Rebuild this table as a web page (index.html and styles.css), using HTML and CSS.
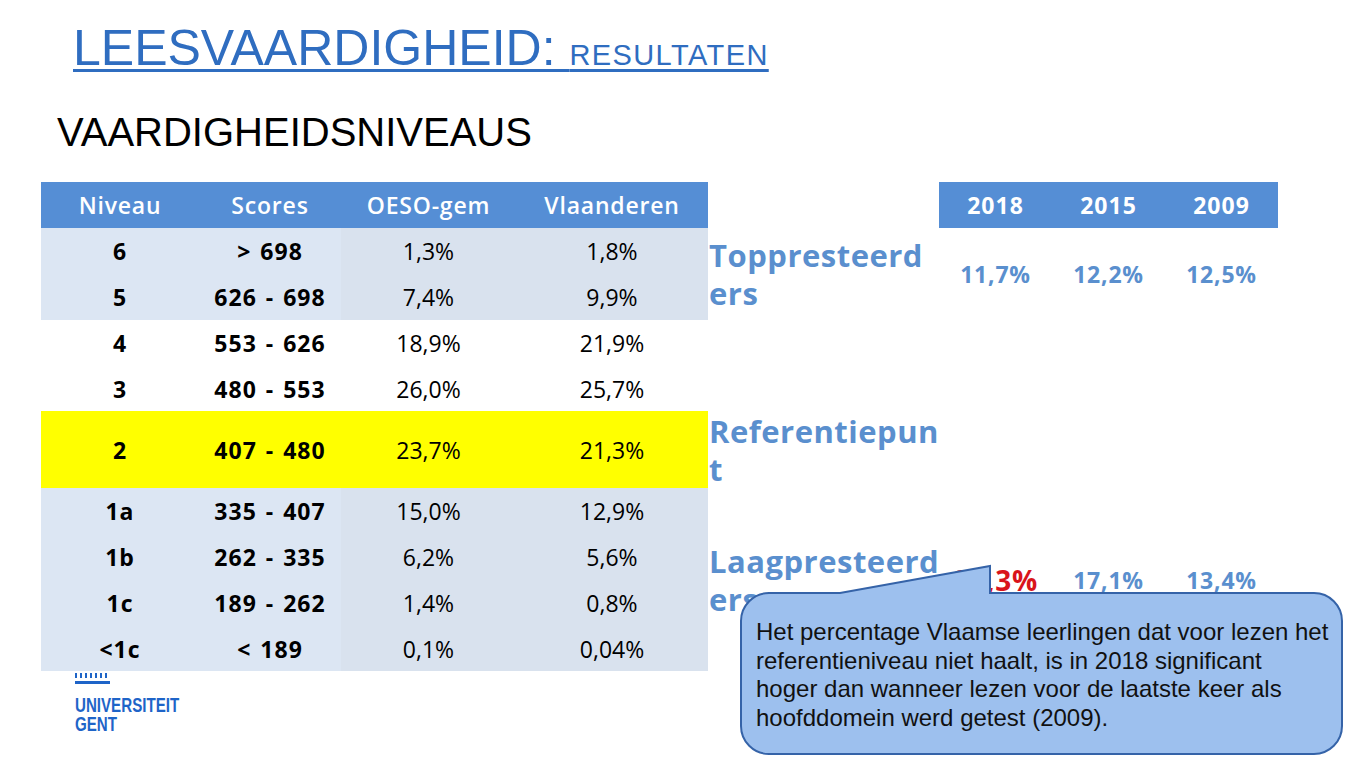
FILE: index.html
```html
<!DOCTYPE html>
<html lang="nl">
<head>
<meta charset="utf-8">
<title>Leesvaardigheid: resultaten</title>
<link rel="stylesheet" href="styles.css">
</head>
<body>
<div class="slide">
  <h1 class="title"><span class="title-main">LEESVAARDIGHEID: </span><span class="title-sub">RESULTATEN</span></h1>
  <h2 class="subtitle">VAARDIGHEIDSNIVEAUS</h2>

  <div class="content">
    <div class="left">
      <table class="levels">
        <colgroup>
          <col class="c1"><col class="c2"><col class="c3"><col class="c4">
        </colgroup>
        <thead>
          <tr class="head"><th>Niveau</th><th>Scores</th><th>OESO-gem</th><th>Vlaanderen</th></tr>
        </thead>
        <tbody>
          <tr class="band"><td class="b">6</td><td class="b">&gt; 698</td><td>1,3%</td><td>1,8%</td></tr>
          <tr class="band"><td class="b">5</td><td class="b">626 - 698</td><td>7,4%</td><td>9,9%</td></tr>
          <tr class="plain"><td class="b">4</td><td class="b">553 - 626</td><td>18,9%</td><td>21,9%</td></tr>
          <tr class="plain short"><td class="b">3</td><td class="b">480 - 553</td><td>26,0%</td><td>25,7%</td></tr>
          <tr class="ref"><td class="b">2</td><td class="b">407 - 480</td><td>23,7%</td><td>21,3%</td></tr>
          <tr class="band"><td class="b">1a</td><td class="b">335 - 407</td><td>15,0%</td><td>12,9%</td></tr>
          <tr class="band"><td class="b">1b</td><td class="b">262 - 335</td><td>6,2%</td><td>5,6%</td></tr>
          <tr class="band"><td class="b">1c</td><td class="b">189 - 262</td><td>1,4%</td><td>0,8%</td></tr>
          <tr class="band short"><td class="b">&lt;1c</td><td class="b">&lt; 189</td><td>0,1%</td><td>0,04%</td></tr>
        </tbody>
      </table>

      <div class="logo">
        <svg class="logo-mark" width="36" height="13" viewBox="0 0 36 13" aria-hidden="true">
          <g fill="#1E64C8">
            <rect x="0" y="0" width="2" height="5"/>
            <rect x="5" y="0" width="2" height="5"/>
            <rect x="10" y="0" width="2" height="5"/>
            <rect x="15" y="0" width="2" height="5"/>
            <rect x="20" y="0" width="2" height="5"/>
            <rect x="25" y="0" width="2" height="5"/>
            <rect x="30" y="0" width="2" height="5"/>
            <rect x="0" y="8" width="35" height="3"/>
          </g>
        </svg>
        <div class="logo-text">
          <div class="logo-line">UNIVERSITEIT</div>
          <div class="logo-line">GENT</div>
        </div>
      </div>
    </div>

    <div class="trend">
      <div class="t-label t-headlabel"></div>
      <div class="t-year">2018</div>
      <div class="t-year">2015</div>
      <div class="t-year">2009</div>

      <div class="t-label">Toppresteerd<br>ers</div>
      <div class="t-val">11,7%</div>
      <div class="t-val">12,2%</div>
      <div class="t-val">12,5%</div>

      <div class="t-label"></div>
      <div class="t-val"></div>
      <div class="t-val"></div>
      <div class="t-val"></div>

      <div class="t-label">Referentiepun<br>t</div>
      <div class="t-val"></div>
      <div class="t-val"></div>
      <div class="t-val"></div>

      <div class="t-label">Laagpresteerd<br>ers</div>
      <div class="t-val t-red">21,3%</div>
      <div class="t-val">17,1%</div>
      <div class="t-val">13,4%</div>
    </div>
  </div>

  <div class="callout">
    <svg class="callout-shape" width="620" height="205" viewBox="730 555 620 205" aria-hidden="true">
      <path d="M 769 593 L 840 593 L 990 566 L 990 593 L 1314 593 A 28 28 0 0 1 1342 621 L 1342 726 A 28 28 0 0 1 1314 754 L 769 754 A 28 28 0 0 1 741 726 L 741 621 A 28 28 0 0 1 769 593 Z" fill="#9DC0EE" stroke="#3563A8" stroke-width="2" stroke-linejoin="miter"/>
    </svg>
    <p class="callout-text">Het percentage Vlaamse leerlingen dat voor lezen het<br>referentieniveau niet haalt, is in 2018 significant<br>hoger dan wanneer lezen voor de laatste keer als<br>hoofddomein werd getest (2009).</p>
  </div>
</div>
</body>
</html>
```

FILE: styles.css
```css
html, body {
  margin: 0;
  padding: 0;
  background: #ffffff;
}

.slide {
  position: relative;
  width: 1365px;
  height: 768px;
  overflow: hidden;
  background: #ffffff;
  font-family: "Liberation Sans", Arial, sans-serif;
}

.title {
  margin: 0;
  padding: 20px 0 0 73px;
  font-weight: normal;
  line-height: 56px;
  color: #2F6DC0;
  white-space: nowrap;
}

.title-main {
  font-size: 50px;
  text-decoration: underline;
  text-decoration-thickness: 3px;
  text-underline-offset: 4px;
}

.title-sub {
  font-size: 29px;
  letter-spacing: 1.4px;
  text-decoration: underline;
  text-decoration-thickness: 3px;
  text-underline-offset: 4px;
}

.subtitle {
  margin: 25px 0 0 0;
  padding-left: 57px;
  font-size: 40px;
  line-height: 48px;
  font-weight: normal;
  color: #000000;
}

.content {
  display: flex;
  margin-top: 26px;
}

.left {
  margin-left: 41px;
  width: 667px;
}

.levels {
  border-collapse: collapse;
  table-layout: fixed;
  width: 667px;
  font-family: "Open Sans", "Noto Sans", sans-serif;
  font-size: 23px;
  color: #000000;
}

.c1 { width: 158px; }
.c2 { width: 142px; }
.c3 { width: 175px; }
.c4 { width: 192px; }

.levels th,
.levels td {
  padding: 0;
  text-align: center;
  vertical-align: middle;
  height: 46px;
  white-space: nowrap;
}

.levels th {
  background: #558ED5;
  color: #ffffff;
  font-weight: 600;
  letter-spacing: 0.8px;
}

.levels td.b {
  font-weight: 700;
  letter-spacing: 1px;
  word-spacing: 2px;
}

.levels tr.short td {
  height: 45px;
}

.band td {
  background: #DCE6F3;
}

.band td:nth-child(n+3) {
  background: #D9E2EE;
}

.plain td {
  background: #ffffff;
}

.ref td {
  background: #FFFF00;
  height: 77px;
}

.logo {
  margin: 2px 0 0 34px;
  color: #1E64C8;
}

.logo-mark {
  display: block;
}

.logo-text {
  margin-top: 9px;
  font-family: "Liberation Sans", Arial, sans-serif;
  font-weight: 700;
  font-size: 21px;
  transform: scaleX(0.72);
  transform-origin: left top;
}

.logo-line {
  height: 19px;
  line-height: 19px;
  overflow: visible;
}

.trend {
  display: grid;
  grid-template-columns: 231px 113px 113px 113px;
  grid-template-rows: 46px 92px 91px 77px 184px;
  font-family: "Open Sans", "Noto Sans", sans-serif;
  color: #5A8FCE;
}

.t-year {
  background: #558ED5;
  color: #ffffff;
  font-weight: 700;
  font-size: 23px;
  letter-spacing: 1px;
  display: flex;
  align-items: center;
  justify-content: center;
}

.t-label {
  padding-left: 1px;
  font-size: 31px;
  font-weight: 700;
  letter-spacing: 0.5px;
  line-height: 38px;
  display: flex;
  align-items: center;
  white-space: nowrap;
}

.t-val {
  font-size: 23px;
  font-weight: 700;
  letter-spacing: 0.8px;
  display: flex;
  align-items: center;
  justify-content: center;
}

.t-red {
  color: #D9141B;
  font-size: 28px;
}

.callout {
  position: absolute;
  left: 730px;
  top: 555px;
  width: 620px;
  height: 205px;
}

.callout-shape {
  position: absolute;
  left: 0;
  top: 0;
}

.callout-text {
  position: absolute;
  left: 26px;
  top: 63px;
  margin: 0;
  font-family: "Liberation Sans", Arial, sans-serif;
  font-size: 24px;
  line-height: 28.5px;
  color: #111111;
  white-space: nowrap;
}
```
